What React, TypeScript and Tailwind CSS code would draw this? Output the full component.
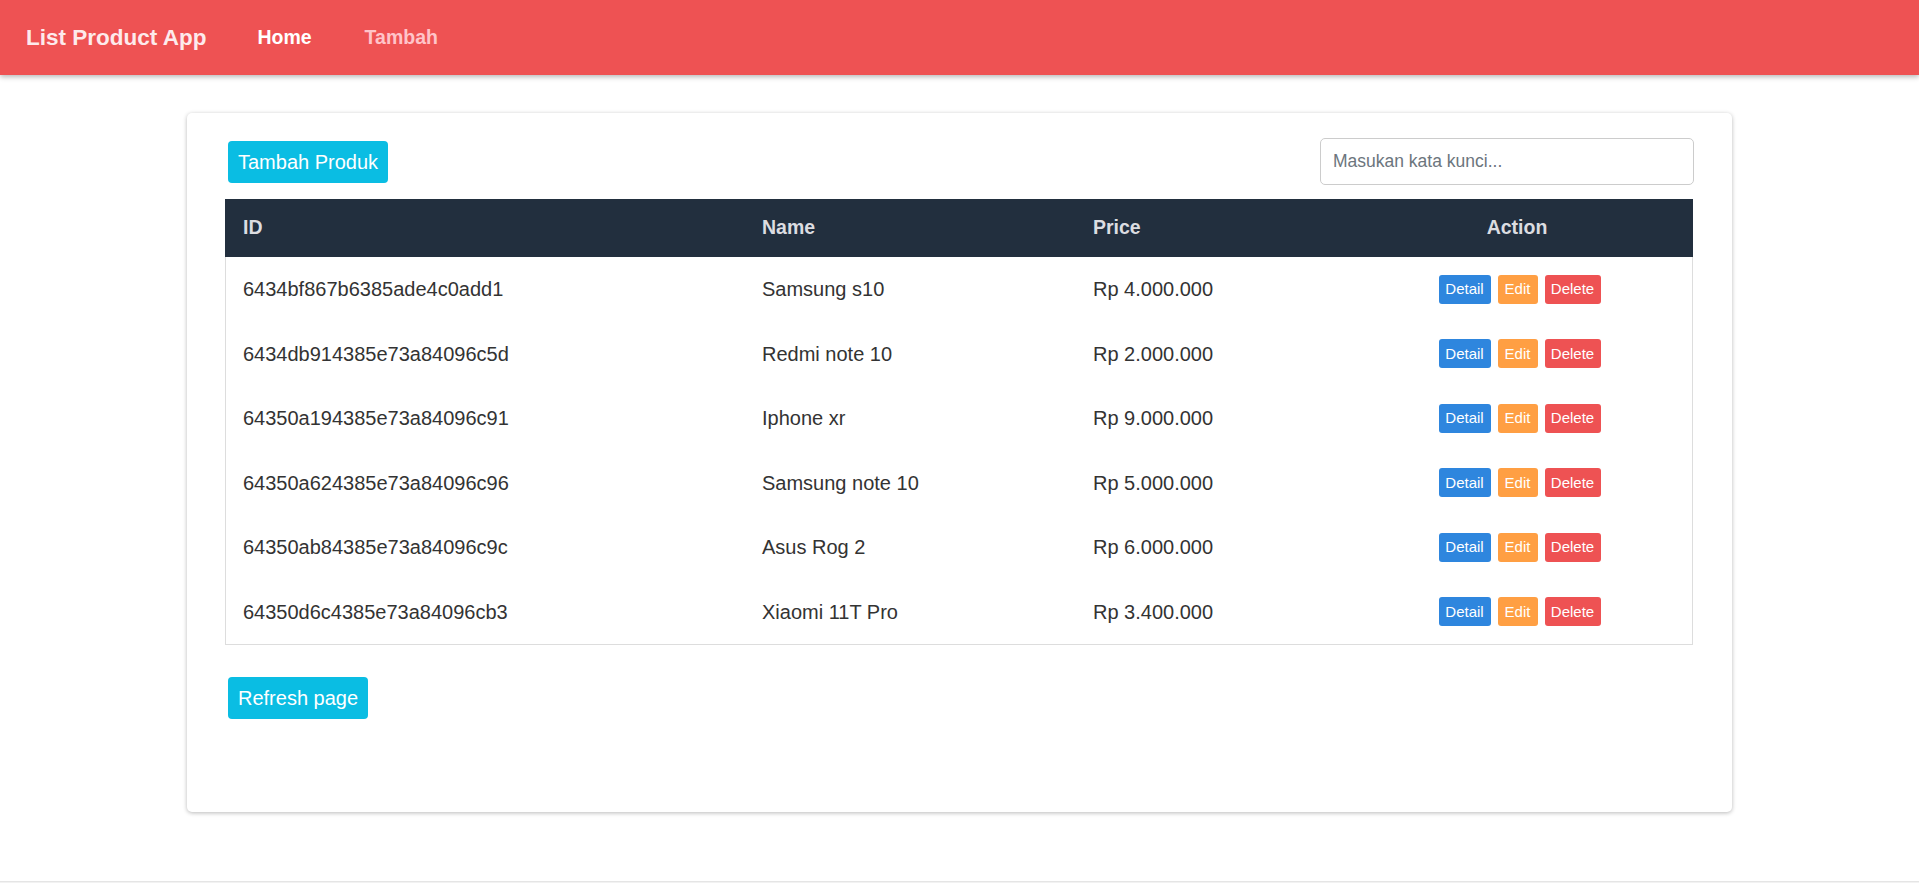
import React from "react";

const rows = [
  { id: "6434bf867b6385ade4c0add1", name: "Samsung s10", price: "Rp 4.000.000" },
  { id: "6434db914385e73a84096c5d", name: "Redmi note 10", price: "Rp 2.000.000" },
  { id: "64350a194385e73a84096c91", name: "Iphone xr", price: "Rp 9.000.000" },
  { id: "64350a624385e73a84096c96", name: "Samsung note 10", price: "Rp 5.000.000" },
  { id: "64350ab84385e73a84096c9c", name: "Asus Rog 2", price: "Rp 6.000.000" },
  { id: "64350d6c4385e73a84096cb3", name: "Xiaomi 11T Pro", price: "Rp 3.400.000" },
];

export default function App() {
  return (
    <div className="min-h-[883px] bg-white font-['Liberation_Sans',Arial,sans-serif] text-[#333]">
      <nav className="relative z-10 flex h-[75px] items-center bg-[#ee5253] shadow-[0_2px_5px_rgba(0,0,0,0.28)]">
        <a className="ml-[26px] text-[22.5px] font-bold text-[#fdeaec]">List Product App</a>
        <a className="ml-[51px] text-[19.5px] font-bold text-white">Home</a>
        <a className="ml-[53px] text-[19.5px] font-bold text-[#ffc4c9]">Tambah</a>
      </nav>

      <div className="pt-[38px]">
        <div className="mx-auto w-[1545px] rounded-[5px] bg-white pb-[93px] pl-[38px] pr-[39px] pt-[25px] shadow-[0_1px_4px_rgba(0,0,0,0.28)]">
          <div className="mb-[14px] flex h-[47px] items-center justify-between">
            <button className="ml-[3px] flex h-[42px] items-center rounded-[4px] bg-[#0abde3] px-[10px] text-[20px] text-white">
              Tambah Produk
            </button>
            <input
              className="mr-[-1px] h-[47px] w-[374px] rounded-[5px] border border-[#cccccc] px-[12px] text-[17.5px] text-[#333] outline-none placeholder:text-[#6c757d]"
              placeholder="Masukan kata kunci..."
            />
          </div>

          <div className="w-[1468px]">
            <div className="grid h-[58px] grid-cols-[519px_331px_266px_352px] items-center bg-[#222f3e] text-[19.5px] font-bold text-[#dcdde1]">
              <div className="pl-[18px]">ID</div>
              <div className="pl-[18px]">Name</div>
              <div className="pl-[18px]">Price</div>
              <div className="text-center">Action</div>
            </div>
            <div className="border-x border-b border-[#dddddd]">
              {rows.map((r) => (
                <div
                  key={r.id}
                  className="grid h-[64.5px] grid-cols-[518px_331px_266px_351px] items-center text-[20px] text-[#333]"
                >
                  <div className="pl-[17px]">{r.id}</div>
                  <div className="pl-[18px]">{r.name}</div>
                  <div className="pl-[18px]">{r.price}</div>
                  <div className="flex items-center justify-center gap-[7px] pl-[6px] text-[15px] text-white">
                    <button className="flex h-[29px] w-[52px] items-center justify-center rounded-[3px] bg-[#2e86de]">
                      Detail
                    </button>
                    <button className="flex h-[29px] w-[40px] items-center justify-center rounded-[3px] bg-[#ff9f43]">
                      Edit
                    </button>
                    <button className="flex h-[29px] w-[56px] items-center justify-center rounded-[3px] bg-[#ee5253]">
                      Delete
                    </button>
                  </div>
                </div>
              ))}
            </div>
          </div>

          <button className="ml-[3px] mt-[32px] flex h-[42px] items-center rounded-[4px] bg-[#0abde3] px-[10px] text-[20px] text-white">
            Refresh page
          </button>
        </div>
      </div>

      <div className="mt-[69px] h-[2px] border-t border-[#e5e5e5] bg-[#f2f2f2]" />
    </div>
  );
}
